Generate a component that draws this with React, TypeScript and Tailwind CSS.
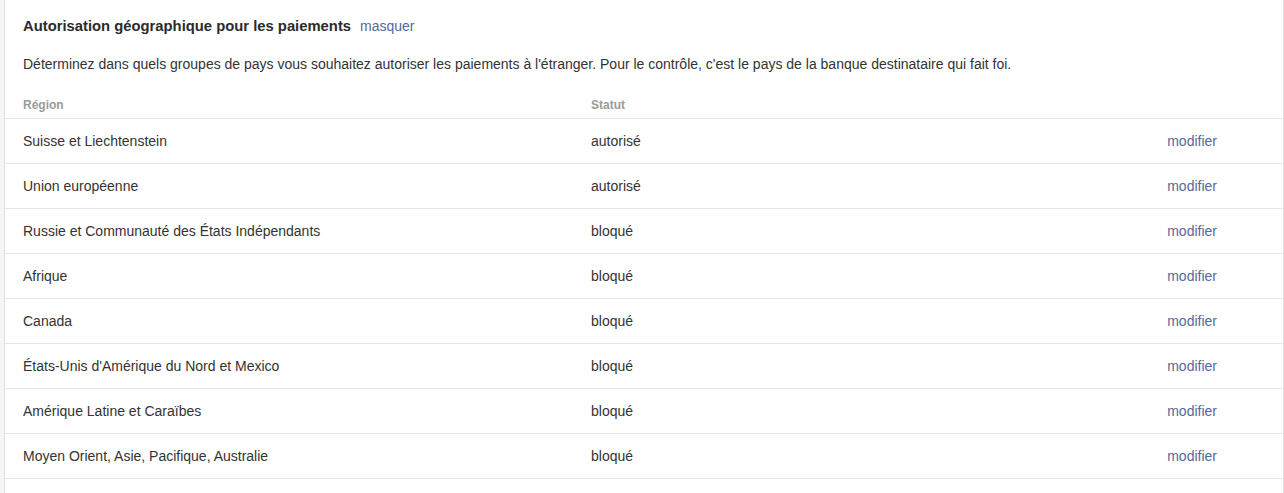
import React from "react";

const rows: [string, string][] = [
  ["Suisse et Liechtenstein", "autorisé"],
  ["Union européenne", "autorisé"],
  ["Russie et Communauté des États Indépendants", "bloqué"],
  ["Afrique", "bloqué"],
  ["Canada", "bloqué"],
  ["États-Unis d'Amérique du Nord et Mexico", "bloqué"],
  ["Amérique Latine et Caraïbes", "bloqué"],
  ["Moyen Orient, Asie, Pacifique, Australie", "bloqué"],
];

export default function App() {
  return (
    <div className="w-[1284px] h-[493px] bg-[#f5f5f5] pl-[4px] overflow-hidden" style={{ fontFamily: '"Liberation Sans", Arial, sans-serif' }}>
      <div className="bg-white border-l border-r border-[#e3e3e3] h-full text-[#333]">
        <div className="pl-[18px] pt-[16px] flex items-baseline gap-[9px]">
          <span className="text-[14.8px] font-bold leading-[20px] text-[#2b2b2b]">Autorisation géographique pour les paiements</span>
          <span className="text-[14px] leading-[20px] text-[#55699e]">masquer</span>
        </div>
        <div className="pl-[18px] pt-[19px] text-[14px] leading-[18px]">
          Déterminez dans quels groupes de pays vous souhaitez autoriser les paiements à l'étranger. Pour le contrôle, c'est le pays de la banque destinataire qui fait foi.
        </div>
        <div className="grid grid-cols-[568px_1fr_auto] pl-[18px] pt-[25px] pb-[6px] text-[12px] font-bold leading-[14px] text-[#9a9a9a] border-b border-[#e6e6e6]">
          <div>Région</div>
          <div>Statut</div>
          <div></div>
        </div>
        {rows.map(([r, s]) => (
          <div key={r} className="grid grid-cols-[568px_1fr_auto] items-center pl-[18px] h-[45px] pt-[1px] text-[14px] border-b border-[#e6e6e6]">
            <div>{r}</div>
            <div>{s}</div>
            <div className="pr-[66px] text-[#55699e]">modifier</div>
          </div>
        ))}
      </div>
    </div>
  );
}
